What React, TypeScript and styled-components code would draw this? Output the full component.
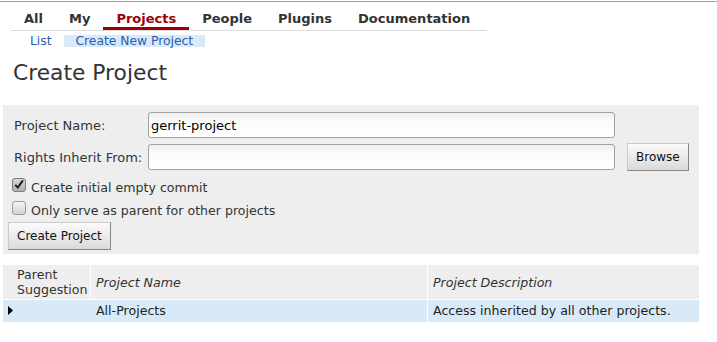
import { createGlobalStyle, styled } from "styled-components";

const GlobalStyle = createGlobalStyle`
  html, body {
    margin: 0;
    padding: 0;
    background: #fff;
  }
  body {
    font-family: "DejaVu Sans", Verdana, sans-serif;
    font-size: 13px;
    color: #333;
  }
`;

const Page = styled.div`
  margin-top: 1px;
  border-top: 1px solid #a4a4a4;
  padding: 0 18px 20px 3px;
`;

const Menu = styled.ul`
  display: flex;
  width: fit-content;
  list-style: none;
  margin: 0 0 0 8px;
  padding: 0 4px 0 0;
  border-bottom: 1px solid #dcdcdc;
`;

const MenuItem = styled.li<{ $active?: boolean }>`
  padding: 9px 13px 0;
  line-height: 16px;
  font-weight: bold;
  color: ${(p) => (p.$active ? "#a00000" : "#333")};
  border-bottom: 3px solid ${(p) => (p.$active ? "#a00000" : "transparent")};
`;

const SubMenu = styled.ul`
  display: flex;
  list-style: none;
  margin: 4px 0 0 15px;
  padding: 0;
`;

const SubItem = styled.li<{ $active?: boolean }>`
  padding: 0 12px;
  font-size: 12.3px;
  line-height: 12px;
  color: #2a5db0;
  background: ${(p) => (p.$active ? "#d8eaf8" : "none")};
`;

const Title = styled.h1`
  margin: 13px 0 0 10px;
  font-size: 21.8px;
  line-height: 25px;
  font-weight: normal;
  color: #333;
`;

const Panel = styled.div`
  margin-top: 20px;
  padding: 7px 5px 4px 5px;
  background: #eeeeee;
`;

const FieldGrid = styled.div`
  display: grid;
  grid-template-columns: 128px 467px auto;
  column-gap: 12px;
  row-gap: 5px;
  align-items: center;
`;

const Label = styled.label`
  padding-left: 6px;
  white-space: nowrap;
  color: #333;
`;

const TextInput = styled.input`
  box-sizing: border-box;
  height: 26px;
  width: 100%;
  margin: 0;
  padding: 0 2px;
  border: 1px solid #a2a2a2;
  border-radius: 3px;
  background: linear-gradient(to bottom, #efefef, #fbfbfb 35%, #ffffff);
  font-family: "DejaVu Sans", Verdana, sans-serif;
  font-size: 13px;
  color: #000;
  outline: none;
`;

const Button = styled.button`
  box-sizing: border-box;
  height: 28px;
  margin: 0;
  padding: 0 8px;
  justify-self: start;
  border: 1px solid;
  border-color: #cacaca #858585 #858585 #cacaca;
  border-radius: 0;
  background: linear-gradient(to bottom, #fbfbfb, #dadada);
  font-family: "DejaVu Sans", Verdana, sans-serif;
  font-size: 12px;
  color: #111;
`;

const CheckRow = styled.label<{ $gap: number }>`
  display: flex;
  align-items: flex-start;
  margin-top: ${(p) => p.$gap}px;
  font-size: 12.6px;
  line-height: 20px;
  color: #333;
`;

const Box = styled.span<{ $checked?: boolean }>`
  display: flex;
  align-items: center;
  justify-content: center;
  box-sizing: border-box;
  width: 14px;
  height: 14px;
  margin: 0 5px 0 4px;
  border: 1px solid ${(p) => (p.$checked ? "#7c7c7c" : "#9a9a9a")};
  border-radius: 3px;
  background: ${(p) =>
    p.$checked
      ? "linear-gradient(to bottom, #dadada, #b0b0b0)"
      : "linear-gradient(to bottom, #f6f6f6, #d2d2d2)"};
`;

const SubmitRow = styled.div`
  margin-top: 1px;
`;

const Table = styled.table`
  margin-top: 11px;
  width: 696px;
  table-layout: fixed;
  border-collapse: separate;
  border-spacing: 0;
  font-size: 12.6px;
`;

const Th = styled.th<{ $plain?: boolean; $last?: boolean }>`
  box-sizing: border-box;
  padding: 2px 5px;
  padding-left: ${(p) => (p.$plain ? "14px" : "5px")};
  background: #eeeeee;
  font-weight: normal;
  font-style: ${(p) => (p.$plain ? "normal" : "italic")};
  text-align: left;
  vertical-align: middle;
  color: #333;
  border-bottom: 1px solid #fff;
  border-right: ${(p) => (p.$last ? "none" : "1px solid #fff")};
`;

const Td = styled.td<{ $edge?: "soft" | "hard" | "none" }>`
  box-sizing: border-box;
  padding: 3px 5px 4px;
  background: #d8eaf8;
  color: #222;
  vertical-align: middle;
  border-right: ${(p) =>
    p.$edge === "soft" ? "1px solid #d8eaf8" : p.$edge === "hard" ? "1px solid #fff" : "none"};
`;

const Pointer = styled.svg`
  display: inline-block;
  vertical-align: baseline;
`;

const menu = ["All", "My", "Projects", "People", "Plugins", "Documentation"];

export default function App() {
  return (
    <>
      <GlobalStyle />
      <Page>
        <Menu>
          {menu.map((m) => (
            <MenuItem key={m} $active={m === "Projects"}>
              {m}
            </MenuItem>
          ))}
        </Menu>
        <SubMenu>
          <SubItem>List</SubItem>
          <SubItem $active>Create New Project</SubItem>
        </SubMenu>

        <Title>Create Project</Title>

        <Panel>
          <FieldGrid>
            <Label>Project Name:</Label>
            <TextInput defaultValue="gerrit-project" />
            <span />
            <Label>Rights Inherit From:</Label>
            <TextInput defaultValue="" />
            <Button>Browse</Button>
          </FieldGrid>
          <CheckRow $gap={7}>
            <Box $checked>
              <svg width="14" height="14" viewBox="0 0 14 14">
                <path d="M2.6 6.8 L5.6 10 L11.6 1.6" fill="none" stroke="#1a1a1a" strokeWidth="2.3" />
              </svg>
            </Box>
            Create initial empty commit
          </CheckRow>
          <CheckRow $gap={3}>
            <Box />
            Only serve as parent for other projects
          </CheckRow>
          <SubmitRow>
            <Button>Create Project</Button>
          </SubmitRow>
        </Panel>

        <Table>
          <colgroup>
            <col style={{ width: 88 }} />
            <col style={{ width: 337 }} />
            <col style={{ width: 271 }} />
          </colgroup>
          <thead>
            <tr>
              <Th $plain>
                Parent
                <br />
                Suggestion
              </Th>
              <Th>Project Name</Th>
              <Th $last>Project Description</Th>
            </tr>
          </thead>
          <tbody>
            <tr>
              <Td $edge="soft">
                <Pointer width="5" height="9" viewBox="0 0 5 9">
                  <path d="M0 0 L5 4.5 L0 9 Z" fill="#000" />
                </Pointer>
              </Td>
              <Td $edge="hard">All-Projects</Td>
              <Td $edge="none">Access inherited by all other projects.</Td>
            </tr>
          </tbody>
        </Table>
      </Page>
    </>
  );
}
